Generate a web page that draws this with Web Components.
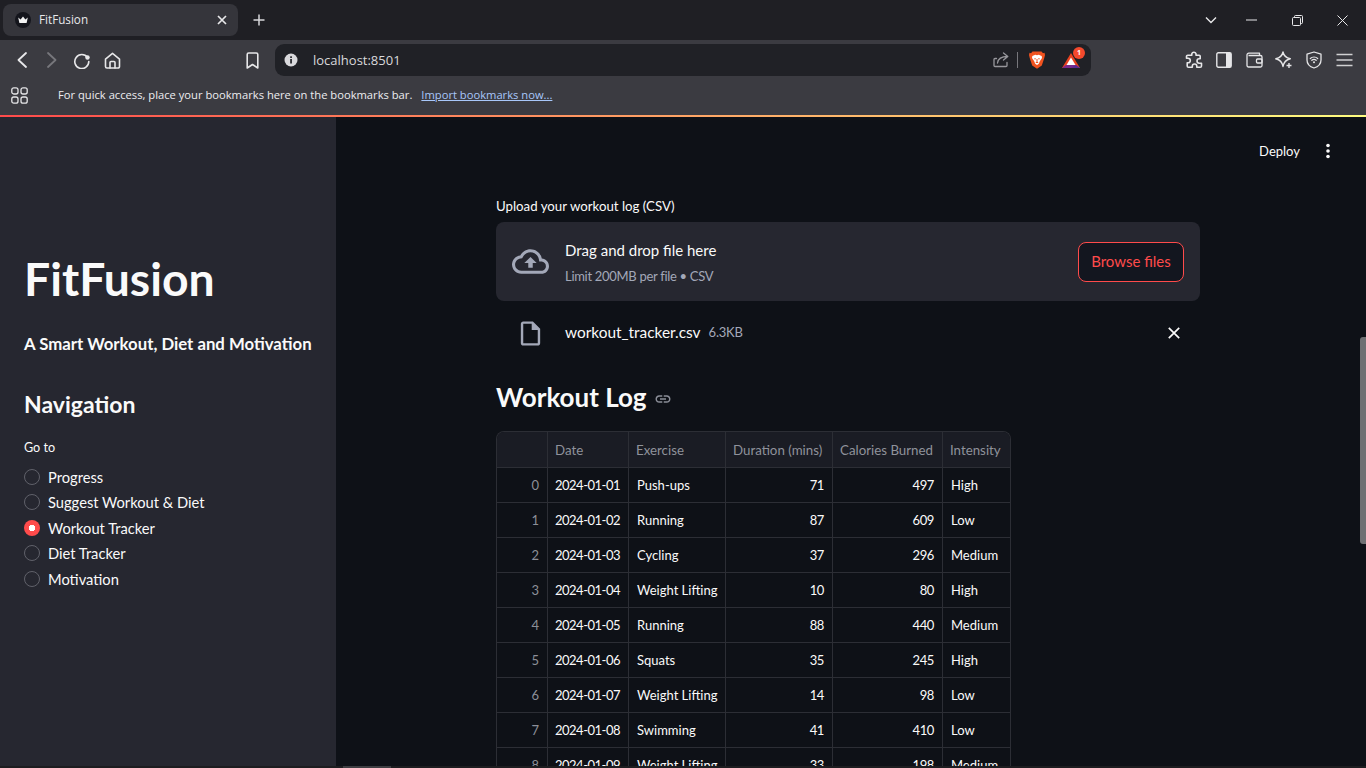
<!DOCTYPE html>
<html lang="en"><head><meta charset="utf-8"><title>FitFusion</title>
<style>
html,body{margin:0;padding:0;height:768px;overflow:hidden;background:#0e1117}
body{font-family:"Lato","Noto Sans",sans-serif;color:#fafafa}
</style></head>
<body>
<fit-page></fit-page>
<script>
const def=(name,html,init)=>{customElements.define(name,class extends HTMLElement{
  constructor(){super();this.attachShadow({mode:'open'}).innerHTML=html;}
  connectedCallback(){init&&init.call(this,this.shadowRoot);}
});};
const ic=(w,h,vb,body,extra='')=>`<svg width="${w}" height="${h}" viewBox="${vb}" fill="none" ${extra}>${body}</svg>`;
const S='stroke="#e6e6e8" stroke-width="1.6" stroke-linecap="round" stroke-linejoin="round"';

def('fit-tabstrip',`<style>
:host{display:flex;align-items:center;height:40px;background:#1f1f24;font:11.7px "Open Sans","Noto Sans",sans-serif;color:#e8e8ea}
.tab{margin-left:3px;width:235px;height:32px;box-sizing:border-box;background:#35353b;border-radius:8px;display:flex;align-items:center;padding:0 10px 0 12px}
.fav{width:16px;height:16px;flex:none;margin-right:8px}
.t{flex:1;margin-top:-2px}
.plus{margin-left:15px;display:flex}
.sp{flex:1}
.w{width:46px;display:flex;justify-content:center}
</style>
<div class="tab"><span class="fav">${ic(16,16,'0 0 16 16','<circle cx="8" cy="8" r="8" fill="#14151c"/><path d="M3.2 5.6 5.6 7.6 8 4.6 10.4 7.6 12.8 5.6 11.6 11H4.4Z" fill="#f3f3f3"/>')}</span><span class="t">FitFusion</span>
${ic(12,12,'0 0 12 12','<path d="M2 2 10 10M10 2 2 10" stroke="#e8e8ea" stroke-width="1.7"/>')}</div>
<span class="plus">${ic(12,12,'0 0 12 12','<path d="M6 .5V11.5M.5 6H11.5" stroke="#d8d8da" stroke-width="1.5"/>')}</span>
<span class="sp"></span>
<span class="w">${ic(12,8,'0 0 12 8','<path d="M1 1.5 6 6.5 11 1.5" stroke="#e8e8ea" stroke-width="1.4"/>')}</span>
<span class="w" style="margin-left:-6px">${ic(11,2,'0 0 11 2','<path d="M0 1H11" stroke="#e8e8ea" stroke-width="1"/>')}</span>
<span class="w">${ic(11,11,'0 0 11 11','<rect x=".5" y="2.5" width="8" height="8" rx="1" stroke="#e8e8ea"/><path d="M2.5 2.5V1.5A1 1 0 0 1 3.5.5H9.5A1 1 0 0 1 10.5 1.5V7.5A1 1 0 0 1 9.5 8.5H8.5" stroke="#e8e8ea"/>')}</span>
<span class="w" style="width:45px;margin-right:1px">${ic(11,11,'0 0 11 11','<path d="M.5 .5 10.5 10.5M10.5 .5 .5 10.5" stroke="#e8e8ea" stroke-width="1"/>')}</span>`);

def('fit-toolbar',`<style>
:host{display:flex;align-items:center;height:40px;background:#3b3b41;padding-left:7px;box-sizing:border-box;font:13px "Open Sans","Noto Sans",sans-serif}
.b{width:30px;height:30px;flex:none;display:flex;align-items:center;justify-content:center}
.url{margin-left:8px;width:816px;height:32px;background:#202126;border-radius:9px;display:flex;align-items:center;flex:none;box-sizing:border-box;padding-left:9px;color:#d9d9dc}
.info{display:flex;margin-right:15px}
.u{flex:1}
.div{width:1px;height:16px;background:#77777c;margin:0 11px 0 8px}
.bat{position:relative;display:flex;margin-left:17px;margin-right:11px;margin-top:1px}
.badge{position:absolute;left:11px;top:-6px;width:12px;height:12px;border-radius:50%;background:#f4492d;color:#fff;font:700 7px/12px "Noto Sans",sans-serif;text-align:center}
</style>
<span class="b">${ic(10,16,'0 0 10 16','<path d="M9 1 1.5 8 9 15" stroke="#e8e8ea" stroke-width="1.8" stroke-linecap="round" stroke-linejoin="round"/>')}</span>
<span class="b">${ic(10,16,'0 0 10 16','<path d="M1 1 8.5 8 1 15" stroke="#77777c" stroke-width="1.8" stroke-linecap="round" stroke-linejoin="round"/>')}</span>
<span class="b">${ic(18,18,'0 0 18 18','<path d="M14.5 6.500A7 7 0 1 0 15.8 10.5" stroke="#e8e8ea" stroke-width="1.6" stroke-linecap="round"/><circle cx="14.5" cy="6.5" r="2.2" fill="#e8e8ea"/>')}</span>
<span class="b">${ic(17,17,'0 0 17 17',`<path d="M1.5 7.2 8.5 1.3 15.5 7.2V14.5A1.5 1.5 0 0 1 14 16H3A1.5 1.5 0 0 1 1.5 14.5Z" ${S}/><path d="M6 16V10.5A1 1 0 0 1 7 9.5H10A1 1 0 0 1 11 10.5V16" ${S}/>`)}</span>
<span class="b" style="margin-left:110px">${ic(13,17,'0 0 13 17',`<path d="M1.2 2.5A1.5 1.5 0 0 1 2.7 1H10.3A1.5 1.5 0 0 1 11.8 2.5V16L6.5 12.5 1.200 16Z" ${S}/>`)}</span>
<div class="url">
 <span class="info">${ic(14,14,'0 0 14 14','<circle cx="7" cy="7" r="6.5" fill="#d9d9dc"/><rect x="6.2" y="6" width="1.7" height="4.5" fill="#202126"/><rect x="6.2" y="3.3" width="1.7" height="1.7" fill="#202126"/>')}</span>
 <span class="u">localhost:8501</span>
 ${ic(16,16,'0 0 16 16','<path d="M14 10.5V13.500A1 1 0 0 1 13 14.5H2A1 1 0 0 1 1 13.5V7.500A1 1 0 0 1 2 6.5H3.500" stroke="#97979c" stroke-width="1.3" stroke-linecap="round"/><path d="M4.500 11C5 7 8 4.500 14.500 4.500M10.500 1 14.800 4.500 10.500 8" stroke="#97979c" stroke-width="1.3" stroke-linecap="round" stroke-linejoin="round"/>')}
 <span class="div"></span>
 ${ic(16,18,'0 0 16 18','<path d="M3.5.5H12.500L14 2.200 15.500 1.800 16 4 15.200 7.200 12.800 14.500 8 17.800 3.200 14.500.8 7.200 0 4 .5 1.800 2 2.200Z" fill="#f1531f"/><path d="M3.300 5 6.300 3.700 8 4.300 9.700 3.700 12.700 5 13 7 10.800 10.300 9.800 12.800 8 14 6.200 12.800 5.200 10.300 3 7Z" fill="#fff"/><path d="M6.800 7.800H5.300M9.200 7.800H10.700M6.800 11.500H9.200M8 8V11.500" stroke="#f1531f" stroke-width="1"/>')}
 <span class="bat">${ic(18,15,'0 0 18 15','<path d="M9 0 18 15H0Z" fill="#e8411f"/><path d="M0 15 4 12H14L18 15Z" fill="#7a2a8c"/><path d="M14 12 18 15 9 15Z" fill="#5c2a90"/><path d="M9 4.500 13.500 12H4.500Z" fill="#fff"/>')}<span class="badge">1</span></span>
</div>
<span class="b" style="margin-left:88px">${ic(18,18,'0 0 18 18',`<path d="M6.800 2.800A2.200 2.200 0 0 1 11 2.800V4.200H14.200A1 1 0 0 1 15.200 5.200V7.800H14.200A2.200 2.200 0 0 0 14.200 12.200H16.500V15A1.300 1.300 0 0 1 15.200 16.300H11.800V15.200A2.200 2.200 0 0 0 7.300 15.200V16.300H3.500A1.300 1.300 0 0 1 2.200 15V11.800H3A2.300 2.300 0 0 0 3 7.200H1.500V5.500A1.300 1.300 0 0 1 2.800 4.200H6.800Z" ${S}/>`)}</span>
<span class="b">${ic(16,16,'0 0 16 16','<rect x=".8" y=".8" width="14.4" height="14.4" rx="1.5" stroke="#e6e6e8" stroke-width="1.4"/><rect x="10" y="1" width="5" height="14" fill="#e6e6e8"/>')}</span>
<span class="b">${ic(17,16,'0 0 17 16',`<path d="M2.500 3.500H14.500A1.500 1.500 0 0 1 16 5V13.500A1.500 1.500 0 0 1 14.500 15H2.500A1.500 1.500 0 0 1 1 13.500V3A1.800 1.800 0 0 1 2.800 1.200H13.500V3.500" stroke="#e6e6e8" stroke-width="1.3" stroke-linejoin="round"/><rect x="10.500" y="7" width="5.500" height="4" rx="1" stroke="#e6e6e8" stroke-width="1.3"/>`)}</span>
<span class="b">${ic(18,18,'0 0 18 18',`<path d="M8 1C8.800 5 10.800 6.800 15.300 7.800 10.800 8.800 8.800 10.800 8 15.500 7.200 10.800 5.200 8.800 .8 7.800 5.200 6.800 7.200 5 8 1Z" stroke="#e6e6e8" stroke-width="1.4" stroke-linejoin="round"/><path d="M14 12V17M11.500 14.500H16.500" stroke="#e6e6e8" stroke-width="1.4"/>`)}</span>
<span class="b">${ic(16,18,'0 0 16 18',`<path d="M8 1 15 3.200V9C15 13 12 15.800 8 17 4 15.800 1 13 1 9V3.200Z" stroke="#e6e6e8" stroke-width="1.3" stroke-linejoin="round"/><path d="M4.300 7.500A5.300 5.300 0 0 1 11.700 7.500M5.800 9.300A3.200 3.200 0 0 1 10.200 9.300" stroke="#e6e6e8" stroke-width="1.2" stroke-linecap="round"/><circle cx="8" cy="11.300" r="1" fill="#e6e6e8"/>`)}</span>
<span class="b">${ic(17,14,'0 0 17 14','<path d="M.5 1.500H16.500M.5 7H16.500M.5 12.500H16.500" stroke="#d0d0d2" stroke-width="1.6"/>')}</span>`);

def('fit-bookmarks',`<style>
:host{display:flex;align-items:center;height:35px;background:#3b3b41;font:11.2px "Open Sans","Noto Sans",sans-serif;color:#ededf0;padding:0 0 5px 11px;box-sizing:border-box}
svg{margin-right:30px}
span,a{margin-top:-2px}
a{color:#a8c7fa;text-decoration:underline;margin-left:9px}
</style>
${ic(17,17,'0 0 17 17','<rect x=".8" y=".8" width="6.2" height="6.2" rx="2" stroke="#e6e6e8" stroke-width="1.3"/><rect x="10" y=".8" width="6.2" height="6.2" rx="2" stroke="#e6e6e8" stroke-width="1.3"/><rect x=".8" y="10" width="6.2" height="6.2" rx="2" stroke="#e6e6e8" stroke-width="1.3"/><rect x="10" y="10" width="6.2" height="6.2" rx="2" stroke="#e6e6e8" stroke-width="1.3"/>')}
<span>For quick access, place your bookmarks here on the bookmarks bar.</span><a>Import bookmarks now...</a>`);

def('fit-radio',`<style>
:host{display:flex;align-items:center;height:25.5px;font-size:14.7px;color:#fafafa}
i{box-sizing:border-box;width:16px;height:16px;border-radius:50%;border:1.5px solid #60616a;margin-right:8px;flex:none;display:block}
:host([on]) i{background:radial-gradient(circle,#fff 0 3px,#ff4b4b 3.5px);border:none}
</style><i></i><slot></slot>`);

def('fit-sidebar',`<style>
:host{display:block;width:336px;flex:none;background:#262730;box-sizing:border-box;padding:131px 16px 0 24px}
h1{margin:0;font-size:46.3px;line-height:60px;font-weight:700}
h3{margin:22px 0 0;font-size:16.75px;line-height:28px;font-weight:700;white-space:nowrap}
h2{margin:28px 0 0;font-size:23px;line-height:36px;font-weight:700}
p{margin:16px 0 6px;font-size:12.6px;line-height:20px}
</style>
<h1>FitFusion</h1><h3>A Smart Workout, Diet and Motivation</h3><h2>Navigation</h2><p>Go to</p>
<slot></slot>`);

def('fit-uploader',`<style>
:host{display:block;width:704px}
label{display:block;font-size:13.25px;line-height:21px;margin-bottom:4px;padding-bottom:1px}
.box{height:79px;box-sizing:border-box;background:#262730;border-radius:8px;display:flex;align-items:center;padding:0 16px}
.cloud{display:flex;margin-right:16px;color:#a3a8b8}
.tx{flex:1;padding-top:2px}
.a{font-size:15px;line-height:22px;margin-bottom:5px}
.b{font-size:13px;line-height:20px;color:#a3a8b8;letter-spacing:-.3px}
button{font:inherit;font-size:15px;width:106px;height:40px;background:#13161f;color:#ff4b4b;border:1px solid #ff4b4b;border-radius:8px;padding:0 0 2px}
.file{margin-top:8px;height:48px;display:flex;align-items:center;padding-left:20px;font-size:15.4px}
.fi{display:flex;margin-right:20px;color:#a3a8b8}
.nm{margin-top:-3px}
.sz{font-size:13px;letter-spacing:-.2px;color:#a3a8b8;margin-left:8px;flex:1;margin-top:-3px}
.x{display:flex;margin-right:20px}
</style>
<label>Upload your workout log (CSV)</label>
<div class="box">
 <span class="cloud">${ic(37,37,'0 0 24 24','<path fill="currentColor" d="M19.35 10.04C18.67 6.59 15.64 4 12 4 9.11 4 6.6 5.64 5.35 8.04 2.34 8.36 0 10.91 0 14c0 3.31 2.69 6 6 6h13c2.76 0 5-2.24 5-5 0-2.64-2.05-4.78-4.65-4.96zM19 18H6c-2.21 0-4-1.79-4-4 0-2.05 1.53-3.76 3.56-3.97l1.07-.11.5-.95C8.08 7.14 9.94 6 12 6c2.62 0 4.88 1.86 5.39 4.43l.3 1.5 1.53.11c1.56.1 2.78 1.41 2.78 2.96 0 1.65-1.35 3-3 3zM8 13h2.55v3h2.9v-3H16l-4-4z"/>')}</span>
 <div class="tx"><div class="a">Drag and drop file here</div><div class="b">Limit 200MB per file • CSV</div></div>
 <button>Browse files</button>
</div>
<div class="file">
 <span class="fi">${ic(29,29,'0 0 24 24','<path fill="currentColor" d="M14 2H6c-1.1 0-1.99.9-1.99 2L4 20c0 1.1.89 2 1.99 2H18c1.1 0 2-.9 2-2V8l-6-6zm4 18H6V4h7v5h5v11z"/>')}</span>
 <span class="nm">workout_tracker.csv</span><span class="sz">6.3KB</span>
 <span class="x">${ic(12,12,'0 0 12 12','<path d="M.8 .8 11.2 11.2M11.2 .8 .8 11.2" stroke="#fafafa" stroke-width="1.7"/>')}</span>
</div>`);

def('fit-heading',`<style>
:host{display:flex;align-items:center;height:40px;font-size:26px;font-weight:700;margin-top:20px;padding-bottom:1px}
svg{margin-left:7px;margin-top:4px}
</style><slot></slot>${ic(18,18,'0 0 24 24','<path fill="#8b8e98" d="M3.9 12c0-1.71 1.39-3.1 3.1-3.1h4V7H7c-2.76 0-5 2.24-5 5s2.24 5 5 5h4v-1.9H7c-1.71 0-3.1-1.39-3.1-3.1zM8 13h8v-2H8v2zm9-6h-4v1.9h4c1.71 0 3.1 1.39 3.1 3.1s-1.39 3.1-3.1 3.1h-4V17h4c2.76 0 5-2.24 5-5s-2.24-5-5-5z"/>')}`);

def('fit-table',`<style>
:host{display:block;width:515px;margin-top:13px}
.g{display:grid;grid-template-columns:50px 81px 97px 107px 110px 68px;grid-auto-rows:35px;border:1px solid #2c2e35;border-bottom:none;border-radius:8px 8px 0 0;overflow:hidden;font-size:13px;box-sizing:border-box;width:515px}
.c{border-left:1px solid #2c2e35;border-top:1px solid #2c2e35;box-sizing:border-box;padding:0 8px 0 7px;display:flex;align-items:center;white-space:nowrap;color:#fafafa}
.c:nth-child(6n+1){border-left:none;color:#8c8f98;justify-content:flex-end}
.c:nth-child(6n+3){padding-left:8px}
.c:nth-child(6n){padding-left:8px}
.d{letter-spacing:-.5px}
.h{background:#1a1c24;color:#8f929b;border-top:none;height:36px;font-size:13.3px}
.h:nth-child(6n+1){color:#8f929b}
.h:nth-child(3),.h:nth-child(6){padding-left:7px}
.r{justify-content:flex-end;letter-spacing:-.4px}
</style><div class="g"></div>`,function(s){
 const rows=[['0','2024-01-01','Push-ups',71,497,'High'],['1','2024-01-02','Running',87,609,'Low'],['2','2024-01-03','Cycling',37,296,'Medium'],['3','2024-01-04','Weight Lifting',10,80,'High'],['4','2024-01-05','Running',88,440,'Medium'],['5','2024-01-06','Squats',35,245,'High'],['6','2024-01-07','Weight Lifting',14,98,'Low'],['7','2024-01-08','Swimming',41,410,'Low'],['8','2024-01-09','Weight Lifting',33,198,'Medium']];
 const head=['','Date','Exercise','Duration (mins)','Calories Burned','Intensity'];
 let h=head.map(t=>`<div class="c h">${t}</div>`).join('');
 rows.forEach(r=>r.forEach((v,i)=>{h+=`<div class="c${i==3||i==4?' r':''}${i==1?' d':''}">${v}</div>`}));
 s.querySelector('.g').innerHTML=h;
});

def('fit-main',`<style>
:host{display:block;flex:1;background:#0e1117;position:relative;overflow:hidden}
.top{height:68px;display:flex;align-items:center;justify-content:flex-end;font-size:13px;padding-right:29px}
.top svg{margin-left:19px}
.body{padding:11px 0 0 160px}
</style>
<div class="top"><span>Deploy</span>${ic(18,18,'0 0 18 18','<circle cx="9" cy="3.5" r="1.8" fill="#fafafa"/><circle cx="9" cy="9" r="1.8" fill="#fafafa"/><circle cx="9" cy="14.5" r="1.8" fill="#fafafa"/>')}</div>
<div class="body"><slot></slot></div>`);

def('fit-page',`<style>
:host{display:block;width:1366px;height:768px;position:relative;overflow:hidden}
.grad{height:2px;background:linear-gradient(90deg,#ff4b4b,#fffd80)}
.app{display:flex;height:651px}
.vthumb{position:absolute;left:1360px;top:337px;width:6px;height:207px;border-radius:3px 0 0 3px;background:#6f7073}
.hbar{position:absolute;left:0;right:0;bottom:0;height:2px;background:#1d1d20}
.hthumb{position:absolute;left:343px;bottom:0;width:48px;height:2px;background:#3e3e42}
</style>
<fit-tabstrip></fit-tabstrip><fit-toolbar></fit-toolbar><fit-bookmarks></fit-bookmarks>
<div class="grad"></div>
<div class="app">
 <fit-sidebar>
  <fit-radio>Progress</fit-radio><fit-radio>Suggest Workout &amp; Diet</fit-radio><fit-radio on>Workout Tracker</fit-radio><fit-radio>Diet Tracker</fit-radio><fit-radio>Motivation</fit-radio>
 </fit-sidebar>
 <fit-main><fit-uploader></fit-uploader><fit-heading>Workout Log</fit-heading><fit-table></fit-table></fit-main>
</div>
<div class="vthumb"></div><div class="hbar"></div><div class="hthumb"></div>`);
</script>
</body></html>
